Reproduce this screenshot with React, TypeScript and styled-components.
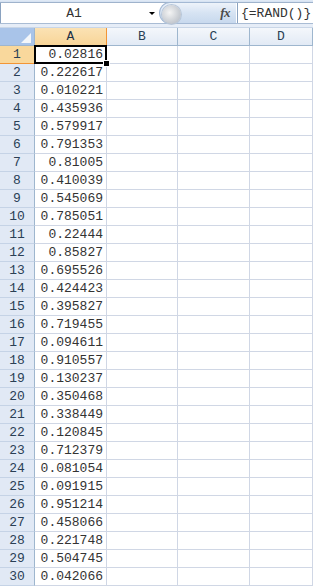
import React from "react";
import styled, { createGlobalStyle, css } from "styled-components";

const GlobalStyle = createGlobalStyle`
  html, body { margin: 0; padding: 0; background: #ffffff; overflow: hidden; }
  body, div, span { font-family: "Liberation Mono", "Courier New", "DejaVu Sans Mono", monospace; }
`;

const mono = css`
  font-family: "Liberation Mono", "Courier New", "DejaVu Sans Mono", monospace;
  font-size: 13px;
`;

const Window = styled.div`
  ${mono}
  width: 313px;
  height: 586px;
  overflow: hidden;
  display: flex;
  flex-direction: column;
  background: #ffffff;
`;

const TopStrip = styled.div`
  height: 3px;
  background: linear-gradient(#e3ecf7, #d3e0f1);
  border-bottom: 1px solid #9fb3cc;
  box-sizing: border-box;
`;

const FormulaBar = styled.div`
  height: 21px;
  display: flex;
  align-items: stretch;
  background: #ffffff;
  border-left: 1px solid #8aa2c0;
  box-sizing: border-box;
`;

const NameBox = styled.div`
  ${mono}
  width: 142px;
  display: flex;
  align-items: center;
  justify-content: center;
  color: #333333;
  padding-left: 2px;
`;

const DropArrow = styled.div`
  width: 14px;
  display: flex;
  align-items: center;
  justify-content: center;
  &::before {
    content: "";
    border-left: 3px solid transparent;
    border-right: 3px solid transparent;
    border-top: 3px solid #000000;
  }
`;

const FxPill = styled.div`
  position: relative;
  width: 77px;
  margin-top: -1px;
  margin-bottom: -1px;
  border-radius: 12px 0 0 12px;
  background: linear-gradient(#eef3fa, #d6e3f3 50%, #c8d9ee);
  border: 1px solid #a4b9d4;
  border-right: none;
  display: flex;
  align-items: center;
  justify-content: flex-end;
  padding-right: 6px;
  box-sizing: border-box;
`;

const Ball = styled.div`
  position: absolute;
  left: 2px;
  top: 2px;
  width: 19px;
  height: 19px;
  border-radius: 50%;
  background: radial-gradient(circle at 40% 40%, #f4f4f4, #c9cdd3 60%, #aeb6c0);
  box-shadow: 0 0 0 1px #b7c6d9;
`;

const FxLabel = styled.span`
  font-family: "Liberation Serif", serif;
  font-style: italic;
  font-weight: bold;
  font-size: 13px;
  color: #4a4a4a;
  letter-spacing: -0.5px;
`;

const FormulaText = styled.div`
  ${mono}
  flex: 1;
  display: flex;
  align-items: center;
  border-left: 1px solid #8aa2c0;
  margin-left: 1px;
  padding-left: 3px;
  color: #333333;
  white-space: nowrap;
`;

const Gap = styled.div`
  height: 5px;
  background: #e6edf7;
  border-top: 1px solid #a9bcd4;
  border-bottom: 1px solid #c9d6e7;
  box-sizing: border-box;
`;

const Grid = styled.div`
  display: grid;
  grid-template-columns: 35px 72px 71px 72px 1fr;
  grid-auto-rows: 18px;
`;

const Corner = styled.div`
  position: relative;
  background: #a9c4e9;
  border-right: 1px solid #9eb6ce;
  border-bottom: 1px solid #9eb6ce;
  box-sizing: border-box;
  &::after {
    content: "";
    position: absolute;
    right: 3px;
    bottom: 2px;
    border-left: 10px solid transparent;
    border-bottom: 10px solid #f4f7fb;
  }
`;

const ColHeader = styled.div<{ $active?: boolean }>`
  ${mono}
  display: flex;
  align-items: center;
  justify-content: center;
  color: ${(p) => (p.$active ? "#1c3048" : "#2a3f55")};
  background: ${(p) =>
    p.$active ? "linear-gradient(#fbe2b4, #f8d598)" : "linear-gradient(#f4f7fb, #e2eaf5)"};
  border-right: 1px solid ${(p) => (p.$active ? "#f29536" : "#9eb6ce")};
  border-bottom: 1px solid ${(p) => (p.$active ? "#f29536" : "#9eb6ce")};
  box-sizing: border-box;
`;

const RowHeader = styled.div<{ $active?: boolean }>`
  ${mono}
  display: flex;
  align-items: center;
  justify-content: center;
  color: #2a3f55;
  background: ${(p) => (p.$active ? "#f9d89c" : "#e1e9f5")};
  border-right: 1px solid ${(p) => (p.$active ? "#f29536" : "#9eb6ce")};
  border-bottom: 1px solid ${(p) => (p.$active ? "#f29536" : "#c5d3e6")};
  box-sizing: border-box;
`;

const Cell = styled.div<{ $selected?: boolean }>`
  ${mono}
  position: relative;
  display: flex;
  align-items: center;
  justify-content: flex-end;
  padding-right: 3px;
  color: #333333;
  border-right: 1px solid #d0d7e5;
  border-bottom: 1px solid #d0d7e5;
  box-sizing: border-box;
  white-space: nowrap;
  ${(p) =>
    p.$selected
      ? `
    &::before {
      content: "";
      position: absolute;
      left: -1px;
      top: -1px;
      right: -1px;
      bottom: -1px;
      border: 2px solid #000000;
      pointer-events: none;
    }
    &::after {
      content: "";
      position: absolute;
      right: -4px;
      bottom: -4px;
      width: 5px;
      height: 5px;
      background: #000000;
      border: 1px solid #ffffff;
      z-index: 2;
    }
  `
      : ""}
`;

const values = [
  "0.02816", "0.222617", "0.010221", "0.435936", "0.579917", "0.791353",
  "0.81005", "0.410039", "0.545069", "0.785051", "0.22444", "0.85827",
  "0.695526", "0.424423", "0.395827", "0.719455", "0.094611", "0.910557",
  "0.130237", "0.350468", "0.338449", "0.120845", "0.712379", "0.081054",
  "0.091915", "0.951214", "0.458066", "0.221748", "0.504745", "0.042066",
];

const columns = ["A", "B", "C", "D"];

export default function App() {
  return (
    <>
      <GlobalStyle />
      <Window>
        <TopStrip />
        <FormulaBar>
          <NameBox>A1</NameBox>
          <DropArrow />
          <FxPill>
            <Ball />
            <FxLabel>fx</FxLabel>
          </FxPill>
          <FormulaText>{"{=RAND()}"}</FormulaText>
        </FormulaBar>
        <Gap />
        <Grid>
          <Corner />
          {columns.map((c) => (
            <ColHeader key={c} $active={c === "A"}>
              {c}
            </ColHeader>
          ))}
          {values.map((v, i) => (
            <React.Fragment key={i}>
              <RowHeader $active={i === 0}>{i + 1}</RowHeader>
              <Cell $selected={i === 0}>{v}</Cell>
              <Cell />
              <Cell />
              <Cell />
            </React.Fragment>
          ))}
        </Grid>
      </Window>
    </>
  );
}
